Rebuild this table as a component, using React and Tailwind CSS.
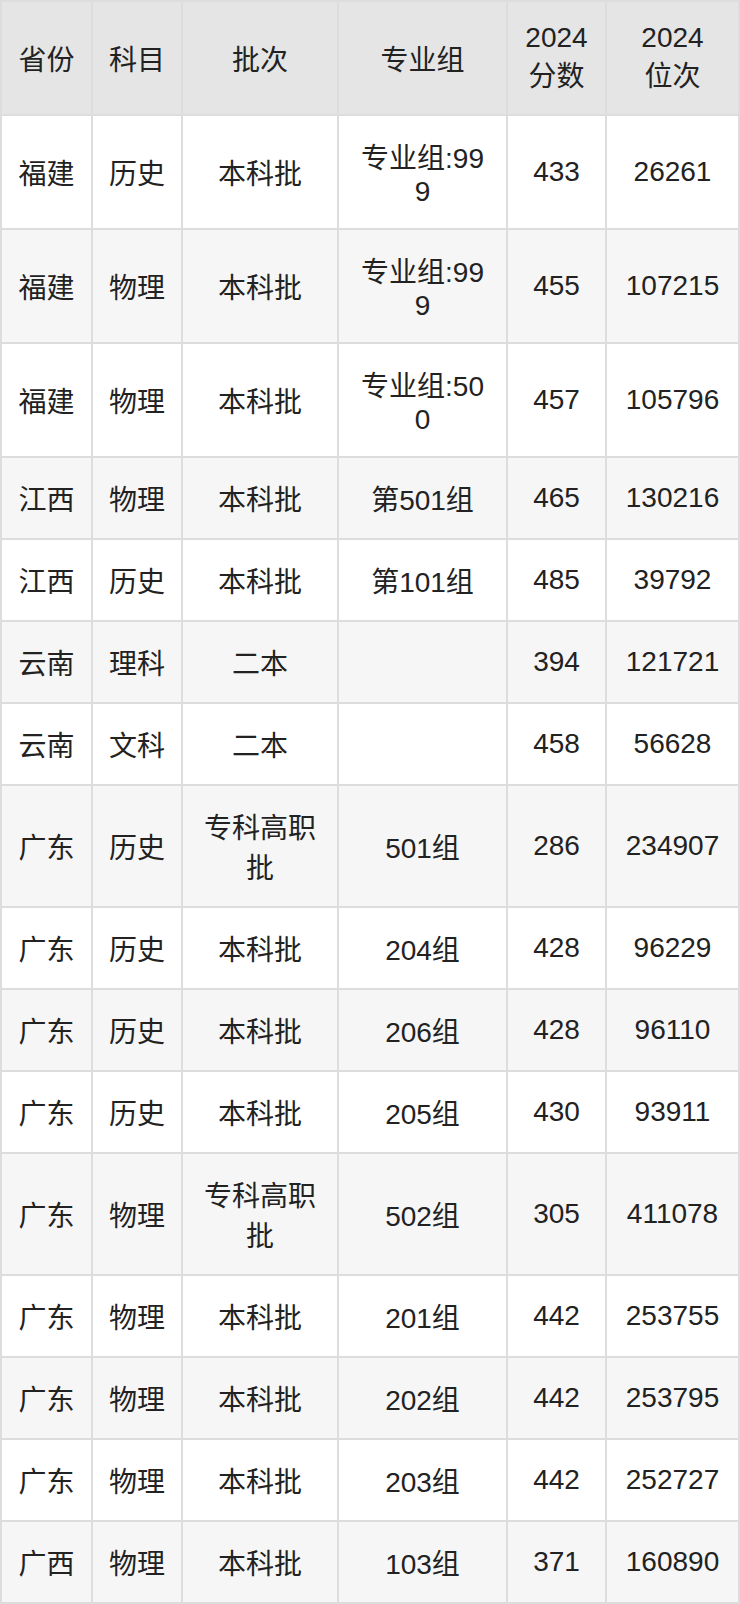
import React from "react";

const rows = [
  ["福建", "历史", "本科批", "专业组:999", "433", "26261"],
  ["福建", "物理", "本科批", "专业组:999", "455", "107215"],
  ["福建", "物理", "本科批", "专业组:500", "457", "105796"],
  ["江西", "物理", "本科批", "第501组", "465", "130216"],
  ["江西", "历史", "本科批", "第101组", "485", "39792"],
  ["云南", "理科", "二本", "", "394", "121721"],
  ["云南", "文科", "二本", "", "458", "56628"],
  ["广东", "历史", "专科高职批", "501组", "286", "234907"],
  ["广东", "历史", "本科批", "204组", "428", "96229"],
  ["广东", "历史", "本科批", "206组", "428", "96110"],
  ["广东", "历史", "本科批", "205组", "430", "93911"],
  ["广东", "物理", "专科高职批", "502组", "305", "411078"],
  ["广东", "物理", "本科批", "201组", "442", "253755"],
  ["广东", "物理", "本科批", "202组", "442", "253795"],
  ["广东", "物理", "本科批", "203组", "442", "252727"],
  ["广西", "物理", "本科批", "103组", "371", "160890"],
];

const headers = [["省份"], ["科目"], ["批次"], ["专业组"], ["2024", "分数"], ["2024", "位次"]];

export default function App() {
  return (
    <div className="w-[740px] bg-white">
      <table
        className="w-[740px] table-fixed border-collapse border-2 border-[#dddddd] text-[28px] leading-[normal] text-[#222222]"
        style={{ fontFamily: '"Liberation Sans", "Noto Sans CJK SC", sans-serif' }}
      >
        <colgroup>
          <col className="w-[91px]" />
          <col className="w-[90px]" />
          <col className="w-[156px]" />
          <col className="w-[169px]" />
          <col className="w-[99px]" />
          <col className="w-[133px]" />
        </colgroup>
        <thead>
          <tr className="bg-[#e5e5e5]">
            {headers.map((h, k) => (
              <th
                key={k}
                className="border-2 border-[#dddddd] px-[15px] py-[20px] text-center align-middle font-normal"
              >
                {h.length === 2 ? (
                  <>
                    {h[0]}
                    <br />
                    {h[1]}
                  </>
                ) : (
                  h[0]
                )}
              </th>
            ))}
          </tr>
        </thead>
        <tbody>
          {rows.map((r, i) => (
            <tr key={i} className={i % 2 === 1 ? "bg-[#f6f6f6]" : "bg-white"}>
              {r.map((c, j) => (
                <td
                  key={j}
                  className="border-2 border-[#dddddd] px-[15px] py-[20px] text-center align-middle break-all"
                >
                  {c}
                </td>
              ))}
            </tr>
          ))}
        </tbody>
      </table>
    </div>
  );
}
